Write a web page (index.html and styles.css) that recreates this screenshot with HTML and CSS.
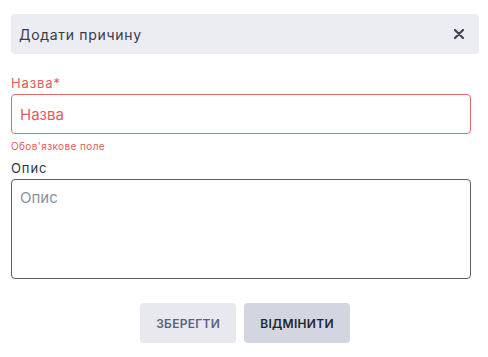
FILE: index.html
```html
<!DOCTYPE html>
<html lang="uk">

<head>
    <meta charset="UTF-8">
    <meta name="viewport" content="width=device-width, initial-scale=1.0">
    <title>Додати причину</title>
    <link rel="stylesheet" href="styles.css">
</head>

<body>
    <div class="dialog">
        <!-- заголовок -->
        <div class="dialog-header">
            <span class="dialog-title">Додати причину</span>
            <span class="dialog-close">
                <svg xmlns="http://www.w3.org/2000/svg" width="10" height="10" viewBox="0 0 10 10">
                    <path d="M1 1L9 9M9 1L1 9" stroke="currentColor" stroke-width="2.2" stroke-linecap="round" />
                </svg>
            </span>
        </div>

        <!-- форма -->
        <div class="dialog-body">
            <div class="field field-error">
                <label class="field-label" for="name">Назва*</label>
                <input class="field-input" id="name" type="text" placeholder="Назва">
                <div class="field-hint">Обов'язкове поле</div>
            </div>

            <div class="field">
                <label class="field-label" for="desc">Опис</label>
                <textarea class="field-input field-textarea" id="desc" placeholder="Опис"></textarea>
            </div>
        </div>

        <div class="dialog-actions">
            <button class="btn btn-save">ЗБЕРЕГТИ</button>
            <button class="btn btn-cancel">ВІДМІНИТИ</button>
        </div>
    </div>
</body>

</html>
```

FILE: styles.css
```css
/* базові стилі */
body {
    margin: 0;
    background-color: #fff;
    font-family: Inter, 'Noto Sans', sans-serif;
    color: #2f3340;
}

.dialog {
    padding: 14px 9px 0 11px;
}

/* заголовок */
.dialog-header {
    display: flex;
    justify-content: space-between;
    align-items: center;
    height: 40px;
    background-color: #ecedf2;
    border-radius: 4px;
    padding: 0 15px 0 8px;
}

.dialog-title {
    font-size: 14px;
    letter-spacing: 0.7px;
    color: #353a47;
}

.dialog-close {
    display: flex;
    color: #3f4452;
    cursor: pointer;
}

/* поля */
.dialog-body {
    padding-top: 21px;
}

.field {
    width: 460px;
}

.field-label {
    display: block;
    font-size: 13px;
    line-height: 16px;
    letter-spacing: 0.9px;
    margin-bottom: 3px;
    color: #2f3340;
}

.field-input {
    display: block;
    width: 100%;
    box-sizing: border-box;
    height: 40px;
    padding: 0 8px;
    border: 1px solid #5a5f6b;
    border-radius: 4px;
    font-family: inherit;
    font-size: 15px;
    color: #2f3340;
    outline: none;
}

.field-input::placeholder {
    color: #8a90a0;
}

.field-textarea {
    height: 100px;
    padding: 9px 8px;
    line-height: 18px;
    resize: none;
}

.field-hint {
    font-size: 10px;
    line-height: 12px;
    letter-spacing: 0.4px;
    margin-top: 6px;
    margin-bottom: 8px;
}

/* стан помилки */
.field-error .field-label,
.field-error .field-hint {
    color: #e05d5d;
}

.field-error .field-input {
    border-color: #e06b6b;
}

.field-error .field-input::placeholder {
    color: #e05d5d;
}

/* кнопки */
.dialog-actions {
    display: flex;
    justify-content: center;
    gap: 8px;
    margin-top: 24px;
}

.btn {
    height: 40px;
    padding: 0 16px;
    border: none;
    border-radius: 4px;
    font-family: inherit;
    font-size: 12px;
    font-weight: 600;
    letter-spacing: 0.3px;
    cursor: pointer;
}

.btn-save {
    background-color: #e8e9ef;
    color: #5a6280;
}

.btn-cancel {
    background-color: #d3d6e0;
    color: #1f2430;
}
```
